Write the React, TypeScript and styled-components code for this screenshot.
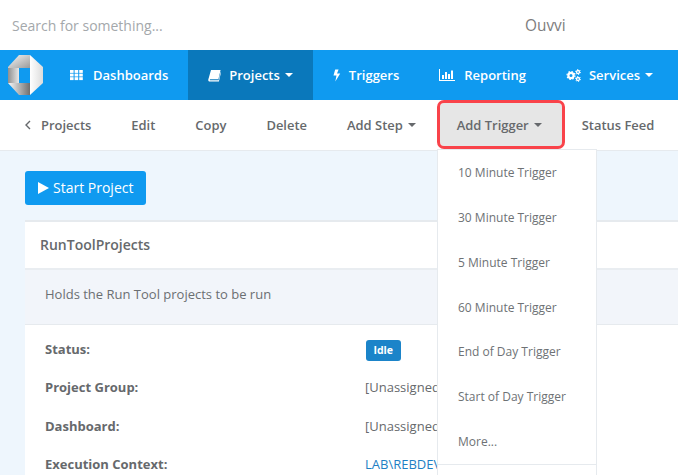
import React from "react";
import styled, { createGlobalStyle } from "styled-components";

const Global = createGlobalStyle`
  html, body { margin: 0; padding: 0; background: #fff; }
  body { font-family: "Open Sans", "Liberation Sans", sans-serif; overflow: hidden; }
`;

const Page = styled.div`
  width: 678px;
  height: 475px;
  overflow: hidden;
  display: flex;
  flex-direction: column;
  background: #eef6fd;
`;
const SearchBar = styled.div`
  height: 50px;
  flex: none;
  background: #fff;
  display: flex;
  align-items: center;
  padding-left: 12px;
`;
const SearchText = styled.div`
  width: 513px;
  font-size: 14px;
  color: #a4a8ab;
`;
const Brand = styled.div`
  font-size: 15.4px;
  color: #7d7d7d;
`;
const Nav = styled.nav`
  height: 50px;
  flex: none;
  background: #0f9af0;
  display: flex;
`;
const LogoSlot = styled.div`
  width: 50px;
  display: flex;
  align-items: center;
  padding-left: 8px;
  box-sizing: border-box;
`;
const NavItem = styled.div<{ $active?: boolean }>`
  padding: 0 20px;
  display: flex;
  align-items: center;
  white-space: nowrap;
  color: #fff;
  font-size: 13px;
  font-weight: 600;
  background: ${(p) => (p.$active ? "#0a78bb" : "transparent")};
  svg.icon { flex: none; }
`;
const NavIcon = styled.span<{ $gap: number }>`
  display: inline-flex;
  margin-right: ${(p) => p.$gap}px;
`;
const Caret = styled.span<{ $color?: string }>`
  display: inline-block;
  width: 0;
  height: 0;
  margin-left: 5px;
  border-left: 4px solid transparent;
  border-right: 4px solid transparent;
  border-top: 4px solid ${(p) => p.$color ?? "#fff"};
`;
const Toolbar = styled.div`
  height: 51px;
  flex: none;
  box-sizing: border-box;
  background: #fff;
  border-bottom: 1px solid #e6eaee;
  display: flex;
  align-items: stretch;
`;
const ToolItem = styled.div<{ $first?: boolean }>`
  padding: 0 20px;
  padding-left: ${(p) => (p.$first ? "25px" : "20px")};
  display: flex;
  align-items: center;
  white-space: nowrap;
  font-size: 12.95px;
  font-weight: 600;
  color: #66696c;
`;
const OpenButton = styled(ToolItem)`
  margin: 3px 0 4px 4px;
  padding: 0 20px 0 17px;
  background: #e6e6e6;
  border-radius: 4px;
  outline: 3px solid #f9434a;
`;
const BackChevron = styled.svg`
  margin-right: 10px;
`;
const Content = styled.div`
  flex: 1;
  position: relative;
  padding: 20px 0 0 25px;
  min-height: 0;
`;
const StartButton = styled.div`
  width: 121px;
  height: 34px;
  box-sizing: border-box;
  background: #0f9af0;
  border-radius: 3px;
  color: #fff;
  font-size: 14px;
  display: flex;
  align-items: center;
  padding: 0 0 1px 13px;
  margin-bottom: 15px;
`;
const PlayIcon = styled.svg`
  margin-right: 4px;
`;
const Card = styled.div`
  background: #fff;
  border-top: 2px solid #e6eaee;
`;
const CardTitle = styled.div`
  height: 44px;
  display: flex;
  align-items: center;
  padding: 0 0 2px 15px;
  font-size: 14px;
  font-weight: 600;
  color: #66696c;
  border-bottom: 2px solid #e9edf1;
`;
const Description = styled.div`
  height: 48px;
  display: flex;
  align-items: center;
  padding: 0 0 6px 20px;
  font-size: 13px;
  color: #6b6f72;
  background: #f2f5fa;
  border-bottom: 1px solid #e6eaee;
`;
const Details = styled.div`
  padding: 14px 0 0 20px;
`;
const Row = styled.div`
  height: 38.4px;
  display: grid;
  grid-template-columns: 320px 1fr;
  font-size: 13px;
  line-height: 20px;
  color: #66696c;
`;
const Label = styled.div`
  font-weight: 700;
`;
const Value = styled.div<{ $link?: boolean }>`
  white-space: nowrap;
  color: ${(p) => (p.$link ? "#1e7fc4" : "#66696c")};
`;
const Badge = styled.span`
  display: inline-block;
  background: #1b84c9;
  color: #fff;
  font-size: 10.5px;
  font-weight: 700;
  line-height: 21px;
  height: 21px;
  padding: 0 7.5px;
  margin-left: 1px;
  border-radius: 3px;
`;
const Menu = styled.div`
  position: absolute;
  left: 437px;
  top: -2px;
  bottom: 0;
  width: 160px;
  box-sizing: border-box;
  background: #fff;
  border: 1px solid #e6eaee;
  border-bottom: none;
`;
const MenuList = styled.div`
  height: 315px;
  box-sizing: border-box;
  padding-top: 0.3px;
  border-bottom: 1px solid #e6eaee;
  display: flex;
  flex-direction: column;
`;
const MenuItem = styled.div`
  height: 44.8px;
  flex: none;
  display: flex;
  align-items: center;
  padding-left: 20px;
  font-size: 12px;
  color: #6e7275;
`;

const Logo = () => (
  <svg width="35" height="40" viewBox="0 0 35 40">
    <defs>
      <linearGradient id="a" x1="0" y1="0" x2="1" y2="1">
        <stop offset="0" stopColor="#f8f8f8" />
        <stop offset="1" stopColor="#9a9a9a" />
      </linearGradient>
      <linearGradient id="b" x1="0" y1="0" x2="1" y2="0">
        <stop offset="0" stopColor="#8f8f8f" />
        <stop offset="1" stopColor="#e8e8e8" />
      </linearGradient>
      <linearGradient id="c" x1="0" y1="0" x2="1" y2="0">
        <stop offset="0" stopColor="#fafafa" />
        <stop offset="1" stopColor="#6f6f6f" />
      </linearGradient>
      <linearGradient id="d" x1="0" y1="0" x2="1" y2="0">
        <stop offset="0" stopColor="#ffffff" />
        <stop offset="1" stopColor="#dcdcdc" />
      </linearGradient>
    </defs>
    <polygon points="0,12 11,0 22,0 22,13 11,13 0,13" fill="url(#a)" />
    <polygon points="0,13 11,13 11,28 0,28" fill="url(#b)" />
    <polygon points="0,28 22,28 22,40 11,40" fill="url(#c)" />
    <polygon points="22,0 35,12 35,28 22,40" fill="url(#d)" />
  </svg>
);

const GridIcon = () => (
  <svg className="icon" width="13" height="12" viewBox="0 0 13 12" fill="#fff">
    {[0, 4.6, 9.2].flatMap((x) =>
      [1, 4.6, 8.2].map((y) => <rect key={`${x}-${y}`} x={x} y={y} width="3.6" height="2.9" />)
    )}
  </svg>
);
const BookIcon = () => (
  <svg className="icon" width="13" height="13" viewBox="0 0 13 13" fill="#fff">
    <path d="M3 1h9.600l-2.200 9.200H2.600c-.8 0-1 .7-.6 1h8.600l2-8.200.4.6-2.100 9H1.800C.7 12.600 0 11.600 .3 10.500z" />
  </svg>
);
const BoltIcon = () => (
  <svg className="icon" width="8" height="13" viewBox="0 0 8 13" fill="#fff">
    <path d="M2.200 .5h3.400L4 4.500h3.200L2.300 12.600l1.200-6H.5z" />
  </svg>
);
const ChartIcon = () => (
  <svg className="icon" width="16" height="12" viewBox="0 0 16 12" fill="#fff">
    <path d="M0 0h1v11h15v1H0z" />
    <rect x="3" y="6" width="2" height="4" />
    <rect x="6" y="3" width="2" height="7" />
    <rect x="9" y="5" width="2" height="5" />
    <rect x="12" y="1.500" width="2" height="8.500" />
  </svg>
);
const CogsIcon = () => (
  <svg className="icon" width="15" height="13" viewBox="0 0 15 13" fill="none" stroke="#fff">
    <circle cx="5" cy="6.500" r="2.600" strokeWidth="2.200" />
    <circle cx="5" cy="6.500" r="4" strokeWidth="1.200" strokeDasharray="1.500 1.640" />
    <circle cx="12" cy="3" r="1.500" strokeWidth="1.300" />
    <circle cx="12" cy="3" r="2.500" strokeWidth="1" strokeDasharray="1.200 1.420" />
    <circle cx="12" cy="10" r="1.500" strokeWidth="1.300" />
    <circle cx="12" cy="10" r="2.500" strokeWidth="1" strokeDasharray="1.200 1.420" />
  </svg>
);

const triggers = [
  "10 Minute Trigger",
  "30 Minute Trigger",
  "5 Minute Trigger",
  "60 Minute Trigger",
  "End of Day Trigger",
  "Start of Day Trigger",
  "More...",
];

export default function App() {
  return (
    <Page>
      <Global />
      <SearchBar>
        <SearchText>Search for something...</SearchText>
        <Brand>Ouvvi</Brand>
      </SearchBar>
      <Nav>
        <LogoSlot>
          <Logo />
        </LogoSlot>
        <NavItem>
          <NavIcon $gap={10}><GridIcon /></NavIcon>Dashboards
        </NavItem>
        <NavItem $active>
          <NavIcon $gap={8}><BookIcon /></NavIcon>Projects<Caret />
        </NavItem>
        <NavItem>
          <NavIcon $gap={8}><BoltIcon /></NavIcon>Triggers
        </NavItem>
        <NavItem>
          <NavIcon $gap={9}><ChartIcon /></NavIcon>Reporting
        </NavItem>
        <NavItem>
          <NavIcon $gap={8}><CogsIcon /></NavIcon>Services<Caret />
        </NavItem>
      </Nav>
      <Toolbar>
        <ToolItem $first>
          <BackChevron width="6" height="10" viewBox="0 0 6 10" fill="none" stroke="#66696c" strokeWidth="1.400">
            <path d="M5 1 1 5l4 4" />
          </BackChevron>
          Projects
        </ToolItem>
        <ToolItem>Edit</ToolItem>
        <ToolItem>Copy</ToolItem>
        <ToolItem>Delete</ToolItem>
        <ToolItem>Add Step<Caret $color="#66696c" /></ToolItem>
        <OpenButton>Add Trigger<Caret $color="#66696c" /></OpenButton>
        <ToolItem>Status Feed</ToolItem>
      </Toolbar>
      <Content>
        <StartButton>
          <PlayIcon width="11" height="12" viewBox="0 0 11 12" fill="#fff">
            <path d="M0 0 11 6 0 12z" />
          </PlayIcon>
          Start Project
        </StartButton>
        <Card>
          <CardTitle>RunToolProjects</CardTitle>
          <Description>Holds the Run Tool projects to be run</Description>
          <Details>
            <Row><Label>Status:</Label><Value><Badge>Idle</Badge></Value></Row>
            <Row><Label>Project Group:</Label><Value>[Unassigned]</Value></Row>
            <Row><Label>Dashboard:</Label><Value>[Unassigned]</Value></Row>
            <Row><Label>Execution Context:</Label><Value $link>LAB\REBDEV</Value></Row>
          </Details>
        </Card>
        <Menu>
          <MenuList>
            {triggers.map((t) => <MenuItem key={t}>{t}</MenuItem>)}
          </MenuList>
        </Menu>
      </Content>
    </Page>
  );
}
